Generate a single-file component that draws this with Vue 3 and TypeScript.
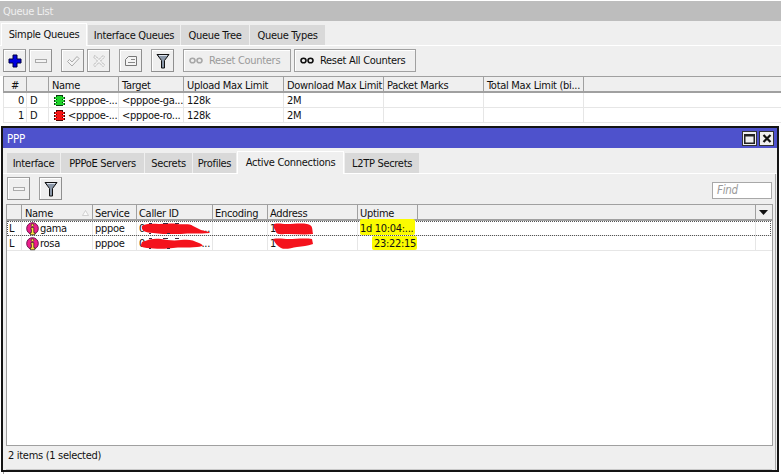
<script setup lang="ts">
interface Tab { label: string; w: number; active?: boolean }
const queueTabs: Tab[] = [
  { label: 'Simple Queues', w: 86, active: true },
  { label: 'Interface Queues', w: 92 },
  { label: 'Queue Tree', w: 68 },
  { label: 'Queue Types', w: 75 },
]
const pppTabs: Tab[] = [
  { label: 'Interface', w: 53 },
  { label: 'PPPoE Servers', w: 83 },
  { label: 'Secrets', w: 47 },
  { label: 'Profiles', w: 43 },
  { label: 'Active Connections', w: 107, active: true },
  { label: 'L2TP Secrets', w: 74 },
]
const queueHead = ['#', '', 'Name', 'Target', 'Upload Max Limit', 'Download Max Limit', 'Packet Marks', 'Total Max Limit (bi...', '']
const queues = [
  { n: '0', f: 'D', color: '#1fd02a', dark: '#0a3c10', name: '<pppoe-...', target: '<pppoe-ga...' },
  { n: '1', f: 'D', color: '#f41414', dark: '#4c0606', name: '<pppoe-...', target: '<pppoe-ro...' },
]
const pppHead = ['', 'Name', 'Service', 'Caller ID', 'Encoding', 'Address', 'Uptime', '', '']
const conns = [
  {
    name: 'gama', up: '1d 10:04:...', selected: true,
    caller: 'M1 3 C6 0 12 1 18 1 S30 0 36 1 S48 0 52 3 L60 7 L68 9 L69 10 C58 11 48 10 40 11 S20 11 12 10 S0 8 1 3 Z',
    addr: 'M1 1 C6 0 8 1 14 1 S28 0 34 1 S39 5 40 11 C32 12 24 11 16 11 S4 12 3 9 S0 5 1 1 Z',
  },
  {
    name: 'rosa', up: '23:22:15', selected: false,
    caller: 'M1 4 C8 1 14 0 20 1 S32 3 40 2 S52 2 58 5 S62 8 56 9 C46 10 38 9 32 10 S14 11 6 10 S0 7 1 4 Z',
    addr: 'M0 1 C6 0 10 1 16 1 S32 0 39 1 L40 6 C34 8 30 8 24 9 S12 12 8 10 S2 5 0 1 Z',
  },
]
</script>

<template>
  <div class="desk">
    <section class="queue">
      <div class="q-title">Queue List</div>
      <div class="tabs q-tabs">
        <div v-for="t in queueTabs" :key="t.label" class="tab" :class="{ on: t.active }" :style="{ width: t.w + 'px' }">{{ t.label }}</div>
      </div>
      <div class="bar q-bar">
        <button class="tool">
          <svg width="14" height="14" viewBox="0 0 14 14"><path d="M5 1h4v4h4v4H9v4H5V9H1V5h4z" fill="#0000e0" stroke="#000040" stroke-width="1"/></svg>
        </button>
        <button class="tool off">
          <svg width="14" height="8" viewBox="0 0 14 8"><rect x="1.500" y="2.500" width="11" height="3" fill="#f4f4f4" stroke="#aaa"/></svg>
        </button>
        <button class="tool off gap">
          <svg width="14" height="14" viewBox="0 0 14 14"><path d="M1.500 7.500l2-2 2.500 2.500 5-5.500 2 2-7 7.500z" fill="#f4f4f4" stroke="#aaa"/></svg>
        </button>
        <button class="tool off">
          <svg width="14" height="14" viewBox="0 0 14 14"><path d="M3 1.500l4 4 4-4 1.500 1.500-4 4 4 4-1.500 1.500-4-4-4 4L1.500 11l4-4-4-4z" fill="#f4f4f4" stroke="#aaa" stroke-dasharray="1.500 0.700"/></svg>
        </button>
        <button class="tool gap">
          <svg width="14" height="12" viewBox="0 0 14 12"><path d="M1.500 4.500L4.500 1.500h8v9h-11z" fill="#f4f4f4" stroke="#777"/><path d="M7 4.500h4M4 7.500h7" stroke="#888"/></svg>
        </button>
        <button class="tool gap">
          <svg width="14" height="16" viewBox="0 0 14 16"><path d="M1 1.500h12L8.500 7.500V15h-3V7.500z" fill="#8a97a8" stroke="#111"/><path d="M3 2.500h8" stroke="#dfe5ee"/></svg>
        </button>
        <button class="wide off w108 gap">
          <svg width="14" height="7" viewBox="0 0 14 7"><ellipse cx="3.500" cy="3.500" rx="2.500" ry="2.300" fill="none" stroke="#a8a8a8" stroke-width="1.600"/><ellipse cx="10.500" cy="3.500" rx="2.500" ry="2.300" fill="none" stroke="#a8a8a8" stroke-width="1.600"/></svg>
          Reset Counters
        </button>
        <button class="wide w122">
          <svg width="14" height="7" viewBox="0 0 14 7"><ellipse cx="3.500" cy="3.500" rx="2.500" ry="2.300" fill="none" stroke="#111" stroke-width="1.600"/><ellipse cx="10.500" cy="3.500" rx="2.500" ry="2.300" fill="none" stroke="#111" stroke-width="1.600"/></svg>
          Reset All Counters
        </button>
      </div>
      <div class="q-table">
        <div class="row head q-cols">
          <div v-for="(h, i) in queueHead" :key="i" class="cell" :class="{ mid: i === 0 }">{{ h }}</div>
        </div>
        <div v-for="q in queues" :key="q.n" class="row q-cols">
          <div class="cell end">{{ q.n }}</div>
          <div class="cell">{{ q.f }}</div>
          <div class="cell icon-cell">
            <svg class="qicon" width="11" height="11" viewBox="0 0 11 11" shape-rendering="crispEdges">
              <rect x="2" y="0" width="7" height="11" :fill="q.dark"/>
              <rect x="3" y="1" width="5" height="9" :fill="q.color"/>
              <rect x="0" y="2" width="11" height="2" :fill="q.dark"/>
              <rect x="1" y="2" width="9" height="2" :fill="q.color"/>
              <rect x="0" y="5" width="11" height="2" :fill="q.dark"/>
              <rect x="1" y="5" width="9" height="2" :fill="q.color"/>
              <rect x="0" y="8" width="11" height="2" :fill="q.dark"/>
              <rect x="1" y="8" width="9" height="2" :fill="q.color"/>
            </svg>
            {{ q.name }}
          </div>
          <div class="cell">{{ q.target }}</div>
          <div class="cell">128k</div>
          <div class="cell">2M</div>
          <div class="cell"></div>
          <div class="cell"></div>
          <div class="cell"></div>
        </div>
      </div>
    </section>

    <section class="ppp">
      <div class="p-title">
        <span>PPP</span>
        <div class="win-btns">
          <span class="win-btn"><svg width="11" height="10" viewBox="0 0 11 10"><path d="M.75 .75h9.500v8.500H.75z" fill="none" stroke="#222" stroke-width="1.500"/><path d="M1 1.500h9" stroke="#222" stroke-width="2"/></svg></span>
          <span class="win-btn"><svg width="10" height="9" viewBox="0 0 10 9"><path d="M1.500 1l7 7M8.500 1l-7 7" stroke="#111" stroke-width="2.200"/></svg></span>
        </div>
      </div>
      <div class="tabs p-tabs">
        <div v-for="t in pppTabs" :key="t.label" class="tab" :class="{ on: t.active }" :style="{ width: t.w + 'px' }">{{ t.label }}</div>
      </div>
      <div class="p-body">
        <div class="bar p-bar">
          <button class="tool off">
            <svg width="14" height="8" viewBox="0 0 14 8"><rect x="1.500" y="2.500" width="11" height="3" fill="#f4f4f4" stroke="#aaa"/></svg>
          </button>
          <button class="tool gap">
            <svg width="14" height="16" viewBox="0 0 14 16"><path d="M1 1.500h12L8.500 7.500V15h-3V7.500z" fill="#8a97a8" stroke="#111"/><path d="M3 2.500h8" stroke="#dfe5ee"/></svg>
          </button>
          <div class="find">Find</div>
        </div>
        <div class="p-table">
          <div class="row head p-cols">
            <div v-for="(h, i) in pppHead" :key="i" class="cell" :class="{ sort: h === 'Name' }">
              {{ h }}
              <svg v-if="h === 'Name'" class="sort-mark" width="7" height="6" viewBox="0 0 7 6"><path d="M3.500 .5L6.500 5.500H.5z" fill="#fbfbfb" stroke="#c8c8c8" stroke-width=".8"/></svg>
              <svg v-if="i === 8" class="menu-mark" width="9" height="5" viewBox="0 0 9 5"><path d="M0 0h9L4.500 5z" fill="#111"/></svg>
            </div>
          </div>
          <div v-for="c in conns" :key="c.name" class="row p-cols" :class="{ selected: c.selected }">
            <div class="cell">L</div>
            <div class="cell icon-cell tight">
              <svg class="picon" width="13" height="14" viewBox="0 0 13 14">
                <circle cx="6.500" cy="6.500" r="5.800" fill="#ee1e8c" stroke="#6a1048"/>
                <circle cx="6.500" cy="3.200" r="1.300" fill="#ffe640" stroke="#222" stroke-width=".6"/>
                <path d="M5 5.600h2.800v5h1v2.200H4.400v-2.200h1v-3H5z" fill="#ffe640" stroke="#222" stroke-width=".7"/>
              </svg>
              {{ c.name }}
            </div>
            <div class="cell">pppoe</div>
            <div class="cell scribbled">
              0
              <span class="tail">...</span>
              <svg class="s-caller" width="70" height="11" viewBox="0 0 70 11"><path :d="c.caller" fill="#f4121c"/><path d="M8 .5h3M22 .5h5M34 .5h4M8 10.500h2M26 10.500h3" stroke="#3a2a40" stroke-width="1"/></svg>
            </div>
            <div class="cell"></div>
            <div class="cell scribbled">
              1
              <svg class="s-addr" width="42" height="12" viewBox="0 0 42 12"><path :d="c.addr" fill="#f4121c"/></svg>
            </div>
            <div class="cell up" :class="{ late: !c.selected }">
              <i class="paint"></i>
              <span>{{ c.up }}</span>
            </div>
            <div class="cell"></div>
            <div class="cell"></div>
          </div>
        </div>
        <div class="status"><span>2 items (1 selected)</span></div>
      </div>
    </section>
    <div class="under"></div>
  </div>
</template>

<style>
html, body { margin: 0; background: #fff; }
</style>

<style scoped>
.desk {
  width: 781px;
  height: 474px;
  overflow: hidden;
  background: #fff;
  font-family: "DejaVu Sans Condensed", "Liberation Sans", sans-serif;
  font-size: 11px;
  letter-spacing: -0.3px;
  color: #111;
  position: relative;
}
button { font: inherit; letter-spacing: inherit; color: inherit; padding: 0; margin: 0; }

.queue { height: 126px; background: #fff; display: flex; flex-direction: column; }
.q-title {
  height: 20px;
  margin-top: 1px;
  background: #bdbdbd;
  color: #f0f0f0;
  font-size: 11px;
  line-height: 22px;
  padding-left: 3px;
}
.tabs { display: flex; background: #efefef; align-items: flex-end; border-bottom: 1px solid #fff; flex: none; }
.q-tabs { height: 25px; padding-left: 1px; gap: 1px; box-sizing: border-box; }
.p-tabs { height: 26px; padding-left: 4px; gap: 1px; box-sizing: border-box; }
.tab {
  height: 20px;
  line-height: 22px;
  text-align: center;
  background: #d9d9d9;
  box-sizing: border-box;
  white-space: nowrap;
}
.tab.on {
  height: 23px;
  line-height: 21px;
  background: #efefef;
  border-top: 1px solid #fff;
  border-left: 1px solid #fff;
  border-right: 1px solid #fff;
  margin-bottom: -1px;
}
.bar { display: flex; align-items: flex-start; background: #efefef; box-sizing: border-box; flex: none; }
.q-bar { height: 30px; padding: 3px 0 0 3px; gap: 3px; }
.tool {
  width: 23px;
  height: 23px;
  box-sizing: border-box;
  background: #efefef;
  border: 1px solid #a0a0a0;
  border-right-color: #8f8f8f;
  border-bottom-color: #8f8f8f;
  box-shadow: inset 1px 1px 0 #fff;
  display: flex;
  align-items: center;
  justify-content: center;
}
.gap { margin-left: 6px; }
.wide {
  height: 23px;
  box-sizing: border-box;
  background: #efefef;
  border: 1px solid #a0a0a0;
  box-shadow: inset 1px 1px 0 #fff;
  display: flex;
  align-items: center;
  gap: 6px;
  padding-left: 5px;
  white-space: nowrap;
}
.wide.off { color: #9a9a9a; }
.w108 { width: 108px; }
.w122 { width: 122px; }

.q-table { margin-left: 3px; background: #fff; flex: 1; }
.row { display: grid; height: 14px; background: #fff; border-bottom: 1px solid #e6e6e6; box-sizing: content-box; position: relative; }
.row.head { height: 14px; background: #efefef; border-top: 1px solid #a0a0a0; border-bottom: 2px solid #a0a0a0; }
.q-cols { grid-template-columns: 24px 22px 70px 65px 100px 100px 100px 100px 1fr; }
.p-cols { grid-template-columns: 15px 71px 44px 76px 55px 90px 60px 1fr 16px; }
.cell {
  box-sizing: border-box;
  border-right: 1px solid #e6e6e6;
  padding-left: 3px;
  white-space: nowrap;
  overflow: hidden;
  line-height: 15px;
  position: relative;
}
.head .cell { border-right: 1px solid #a0a0a0; line-height: 18px; }
.q-table .cell:first-child { border-left: 1px solid #e6e6e6; }
.q-table .head .cell:first-child { border-left-color: #a0a0a0; }
.head .cell:last-child, .row .cell:last-child { border-right: none; }
.mid { text-align: center; padding-left: 0; }
.end { text-align: right; padding: 0 2px 0 0; }
.icon-cell { display: flex; align-items: center; gap: 2px; }
.qicon { margin-left: 2px; margin-right: 1px; flex: none; }
.tight { gap: 1px; padding-left: 3px; }
.picon { margin-left: 1px; flex: none; margin-top: 1px; }

.ppp {
  height: 346px;
  margin-left: 1px;
  width: 778px;
  box-sizing: border-box;
  border: 2px solid #141414;
  background: #efefef;
  display: flex;
  flex-direction: column;
  flex: none;
}
.p-title {
  height: 20px;
  background: #4e52cc;
  color: #fff;
  font-size: 11.500px;
  line-height: 22px;
  padding-left: 4px;
  display: flex;
  justify-content: space-between;
  flex: none;
}
.win-btns { display: flex; gap: 2px; margin: 3px 3px 0 0; }
.win-btn {
  width: 15px;
  height: 15px;
  box-sizing: border-box;
  background: #efefef;
  border: 1px solid #333;
  display: flex;
  align-items: center;
  justify-content: center;
}
.p-body { flex: 1; display: flex; flex-direction: column; padding: 0 0 0 3px; border-right: 1px solid #a8a8a8; margin-right: 1px; min-height: 0; }
.p-bar { height: 30px; padding: 3px 0 0 1px; gap: 3px; }
.p-bar .gap { margin-left: 6px; }
.find {
  margin-left: auto;
  margin-right: 3px;
  margin-top: 5px;
  width: 60px;
  height: 17px;
  box-sizing: border-box;
  border: 1px solid #a8a8a8;
  background: #fff;
  color: #9a9a9a;
  font-style: italic;
  padding-left: 4px;
  line-height: 15px;
  font-size: 11.500px;
}
.p-table {
  flex: 1;
  background: #fff;
  border-left: 1px solid #a0a0a0;
  border-right: 1px solid #a0a0a0;
  border-bottom: 1px solid #a0a0a0;
  margin-right: 2px;
  min-height: 0;
}
.p-table .cell { padding-left: 2px; }
.p-table .tight, .p-table .sort { padding-left: 3px; }
.sort-mark { position: absolute; right: 3px; top: 5px; }
.menu-mark { position: absolute; left: 3px; top: 5px; }
.selected::after {
  content: "";
  position: absolute;
  inset: 0 1px -1px 0;
  border: 1px dotted #555;
  pointer-events: none;
}
.s-caller { position: absolute; left: 4px; top: 2px; }
.s-addr { position: absolute; left: 5px; top: 2px; }
.tail { position: absolute; right: 2px; top: 0; }
.up { overflow: visible; z-index: 1; border-right: none; }
.up span { position: relative; }
.late { text-align: right; padding-right: 2px; }
.paint {
  position: absolute;
  left: 2px;
  right: 3px;
  top: -2px;
  bottom: 1px;
  background: #fbfb00;
  border-radius: 2px;
}
.late .paint { left: 14px; right: 1px; top: 0; bottom: 1px; }
.status {
  height: 24px;
  flex: none;
  font-size: 11px;
  line-height: 19px;
  padding-left: 2px;
  border-bottom: 1px solid #c8c8c8;
  box-sizing: border-box;
  margin-right: 3px;
}
.under { height: 2px; margin-left: 3px; border-left: 1px solid #a0a0a0; }
</style>
